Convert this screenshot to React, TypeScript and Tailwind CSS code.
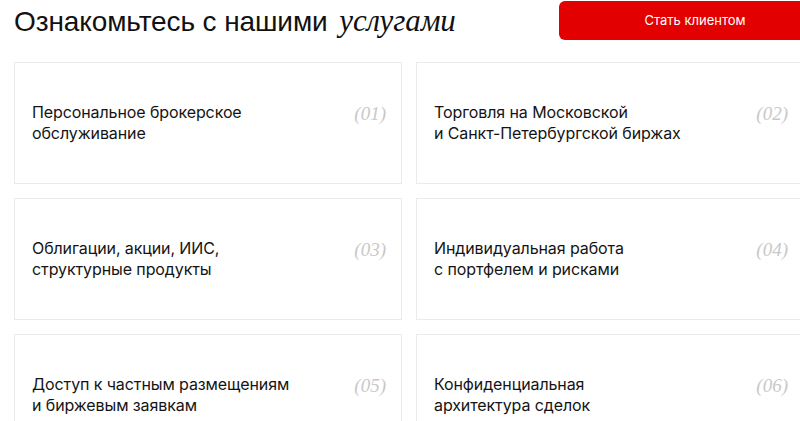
const services = [
  { title: ["Персональное брокерское", "обслуживание"], num: "01" },
  { title: ["Торговля на Московской", "и Санкт-Петербургской биржах"], num: "02" },
  { title: ["Облигации, акции, ИИС,", "структурные продукты"], num: "03" },
  { title: ["Индивидуальная работа", "с портфелем и рисками"], num: "04" },
  { title: ["Доступ к частным размещениям", "и биржевым заявкам"], num: "05" },
  { title: ["Конфиденциальная", "архитектура сделок"], num: "06" },
];

const ServiceCard = ({ title, num }: { title: string[]; num: string }) => (
  <div className="flex h-[122px] items-center justify-between border border-[#ebebeb] bg-white pl-[17px] pr-[15px]">
    <p className="font-['Inter',sans-serif] text-[16px] leading-[21px] tracking-[-0.1px] text-[#141414]">
      {title[0]}
      <br />
      {title[1]}
    </p>
    <span className="-mt-[19px] font-['Liberation_Serif',serif] text-[19px] italic leading-[21px] text-[#c8c8c8]">
      ({num})
    </span>
  </div>
);

export default function App() {
  return (
    <div className="h-[421px] w-[800px] overflow-hidden bg-white">
      <div className="w-[831px] pl-[14px]">
        <header className="flex h-[41px] items-start justify-between pt-px">
          <h1 className="mt-[2px] whitespace-nowrap font-['Liberation_Sans',sans-serif] text-[28px] leading-[36px] tracking-[-0.1px] text-[#111]">
            Ознакомьтесь с нашими{" "}
            <span className="ml-[4px] font-['Liberation_Serif',serif] text-[31px] italic">услугами</span>
          </h1>
          <button className="flex h-[39px] w-[272px] items-center justify-center rounded-[6px] bg-[#e30000] font-['Inter',sans-serif] text-[13px] text-white">
            Стать клиентом
          </button>
        </header>
        <div className="mt-[21px] grid w-[790px] grid-cols-[388px_388px] gap-[14px]">
          {services.map((s) => (
            <ServiceCard key={s.num} title={s.title} num={s.num} />
          ))}
        </div>
      </div>
    </div>
  );
}
